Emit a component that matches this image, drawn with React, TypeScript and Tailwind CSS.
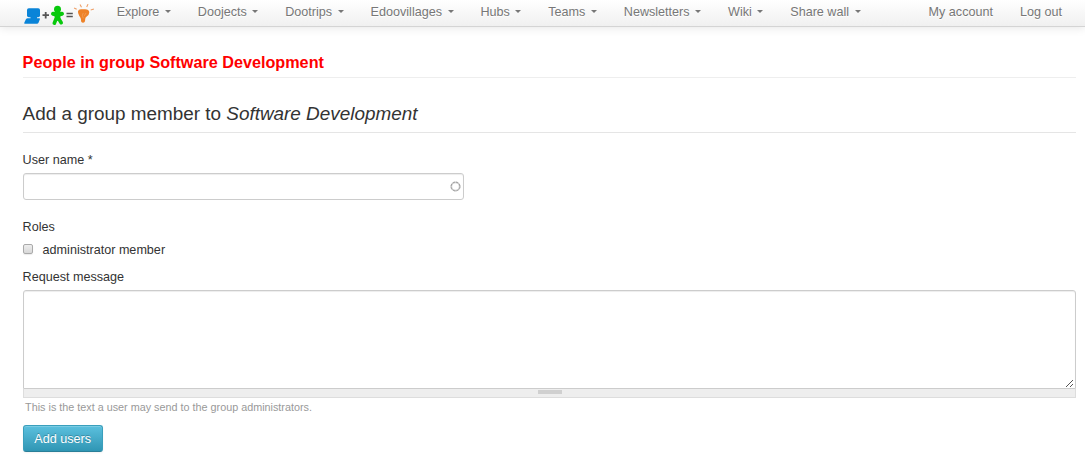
const menus = ['Explore', 'Doojects', 'Dootrips', 'Edoovillages', 'Hubs', 'Teams', 'Newsletters', 'Wiki', 'Share wall'];

function Logo() {
  return (
    <svg className="block h-[24px] w-[72px] shrink-0" viewBox="0 0 72 24">
      <g fill="#0a84d8">
        <rect x="3" y="5.300" width="13" height="8.900" rx="1.800" />
        <path d="M3.800 15.300h11.400q1.100 0 .7 1l-1.400 3.500q-.4 1-1.500 1H1.300q-1.400 0-.9-1.200l1.400-3.200q.6-1.100 2-1.100z" />
        <path d="M6.500 14h6.500v2H6.500z" />
      </g>
      <path d="M18.500 12.200h6.500M21.700 9v6.400" stroke="#555" strokeWidth="1.800" />
      <g fill="#08c90d" stroke="#08c90d" strokeLinecap="round">
        <circle cx="33.500" cy="6.200" r="3.500" stroke="none" />
        <path d="M29 10.700l4 1h1l4-1" strokeWidth="4" fill="none" strokeLinejoin="round" />
        <path d="M31.300 9.500h4.400v7.500h-4.400z" strokeWidth="1.400" />
        <path d="M31.800 16.500l-1.500 3.700M35.200 16.500l2 3.200" strokeWidth="3.600" fill="none" />
      </g>
      <path d="M42.500 10.500h6.300M42.500 13.500h6.300" stroke="#555" strokeWidth="1.600" />
      <path fill="#ee8228" d="M54 8.200q.4-1.800 3-2h4q4 0 4.300 3 0 2.500-2.600 4.200-1.600 1.100-1.500 2.900 0 3.500-2.200 3.500-2.200 0-2-3 0-1.800-1.800-4.100-1.500-2.500-1.200-4.500z" />
      <path fill="none" stroke="#fff" strokeWidth=".6" opacity=".3" d="M59.300 10l-1 2.300 1 3M62 10l-1.700 2.800" />
      <path fill="none" stroke="#ef9f67" strokeWidth="1.100" d="M52.700 6.200l-2.600-1.300M57.500 4.300l-1.500-2.900M62.700 4l1.300-2.900M66.700 6.900l3.200-1" />
    </svg>
  );
}

export default function App() {
  return (
    <div className="h-[473px] overflow-hidden bg-white font-['Liberation_Sans',Arial,sans-serif] text-[12.6px] leading-[18px] text-[#333]">
      <nav className="flex h-[27px] border-b border-[#d4d4d4] bg-linear-to-b from-white to-[#f0f0f0] pl-[24px] pr-[9.5px] text-[#777] shadow-[0_1px_10px_rgba(0,0,0,0.1)] [text-shadow:0_1px_0_#fff]">
        <div className="mr-[7.2px] pt-[3px]"><Logo /></div>
        <ul className="flex">
          {menus.map((name) => (
            <li key={name} className="flex whitespace-nowrap px-[13.48px] pt-[3px]">
              <a>{name}</a>
              <i className="ml-[5.5px] mt-[7px] block h-0 w-0 border-x-[3px] border-t-[3px] border-x-transparent border-t-[#777]" />
            </li>
          ))}
        </ul>
        <ul className="ml-auto flex pt-[3px]">
          <li className="px-[13.5px]">My account</li>
          <li className="px-[13.5px]">Log out</li>
        </ul>
      </nav>

      <main className="pl-[22.6px] pr-[9px] pt-[24px]">
        <h1 className="h-[27px] border-b border-[#eee] text-[16.2px] leading-[23px] font-bold text-[#f00]">People in group Software Development</h1>
        <form>
          <h2 className="mt-[18px] h-[37px] border-b border-[#e5e5e5] text-[18.9px] leading-[36px]">
            Add a group member to <em>Software Development</em>
          </h2>
          <label className="mt-[18px] block">User name *</label>
          <div className="mt-[4px] flex h-[27px] w-[441px] items-center justify-end rounded-[3px] border border-[#ccc] pr-[2px] shadow-[inset_0_1px_1px_rgba(0,0,0,0.075)]">
            <svg className="size-[11px]" viewBox="0 0 11 11" fill="none">
              <circle cx="5.500" cy="5.500" r="4.200" stroke="#ccc" strokeWidth="1.800" />
              <circle cx="5.500" cy="5.500" r="4.400" stroke="#999" strokeWidth=".9" strokeDasharray="2.300 1.156" />
            </svg>
          </div>
          <div className="mt-[18px]">Roles</div>
          <label className="mt-[5px] flex items-center">
            <input type="checkbox" className="relative -top-px mr-[10px] size-[10px] appearance-none rounded-[2px] border border-[#aaa] bg-linear-to-b from-[#eee] to-[#d8d8d8] shadow-[0_1px_1px_rgba(0,0,0,0.08)]" />
            administrator member
          </label>
          <label className="mt-[9px] block">Request message</label>
          <div className="mt-[4px] flex h-[99px] items-end justify-end rounded-t-[3px] border border-[#ccc] p-px shadow-[inset_0_1px_1px_rgba(0,0,0,0.075)]">
            <svg className="size-[8px]" viewBox="0 0 8 8" shapeRendering="crispEdges" fill="#555">
              <path d="M0 7h1v1H0zM1 6h1v1H1zM2 5h1v1H2zM3 4h1v1H3zM4 3h1v1H4zM5 2h1v1H5zM6 1h1v1H6zM4 7h1v1H4zM5 6h1v1H5zM6 5h1v1H6z" />
            </svg>
          </div>
          <div className="flex h-[9px] justify-center border border-t-0 border-[#ddd] bg-[#eee] pl-px pt-px">
            <i className="block h-[4px] w-[24px] bg-[#d0d0d0]" />
          </div>
          <p className="pl-[2.500px] text-[10.8px] text-[#999]">This is the text a user may send to the group administrators.</p>
          <button type="button" className="mt-[9px] block h-[27px] w-[80px] rounded-[3px] border border-[#3a9fbc] border-b-[#2a7f98] bg-linear-to-b from-[#5bc0de] to-[#2f96b4] text-white shadow-[inset_0_1px_0_rgba(255,255,255,0.2),0_1px_2px_rgba(0,0,0,0.05)] [text-shadow:0_-1px_0_rgba(0,0,0,0.25)]">
            Add users
          </button>
        </form>
      </main>
    </div>
  );
}
